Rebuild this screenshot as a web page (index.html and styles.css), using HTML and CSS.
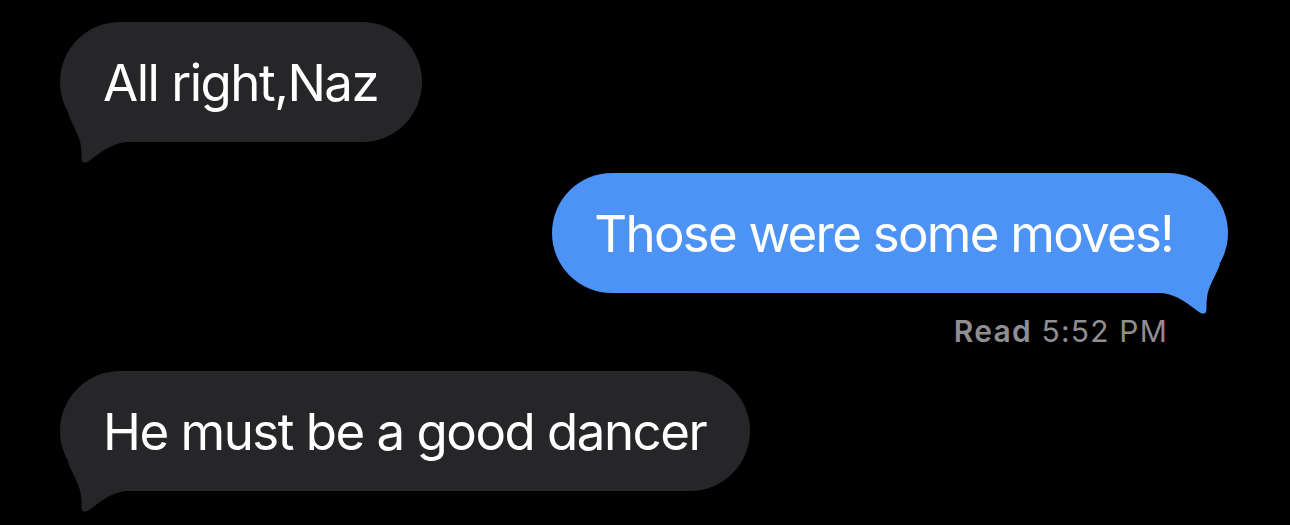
FILE: index.html
```html
<!DOCTYPE html>
<html lang="en">
<head>
    <meta charset="UTF-8">
    <meta name="viewport" content="width=device-width, initial-scale=1.0">
    <title>Messages</title>
    <link rel="stylesheet" href="styles.css">
</head>
<body>
    <div class="thread">
        <div class="bubble received">
            All right,Naz
            <svg class="tail" viewBox="0 0 70 50" width="70" height="50">
                <path d="M8 0 C12 12, 20 22, 21 34 C22 40, 21 45, 22 48 C23 50, 26 50, 29 48 C40 40, 50 31, 66 29 L66 0 Z" />
            </svg>
        </div>

        <div class="bubble sent">
            Those were some moves!
            <svg class="tail" viewBox="0 0 70 50" width="70" height="50">
                <path d="M8 0 C12 12, 20 22, 21 34 C22 40, 21 45, 22 48 C23 50, 26 50, 29 48 C40 40, 50 31, 66 29 L66 0 Z" />
            </svg>
        </div>
        <div class="receipt"><b>Read</b> 5:52 PM</div>

        <div class="bubble received last">
            He must be a good dancer
            <svg class="tail" viewBox="0 0 70 50" width="70" height="50">
                <path d="M8 0 C12 12, 20 22, 21 34 C22 40, 21 45, 22 48 C23 50, 26 50, 29 48 C40 40, 50 31, 66 29 L66 0 Z" />
            </svg>
        </div>
    </div>
</body>
</html>
```

FILE: styles.css
```css
body{
    margin: 0;
    background-color: #000;
    font-family: Inter, "Noto Sans", sans-serif;
    height: 525px;
    overflow: hidden;
}
.thread{
    display: flex;
    flex-direction: column;
    align-items: flex-start;
    padding: 22px 62px 0 60px;
}
.bubble{
    position: relative;
    height: 120px;
    box-sizing: border-box;
    padding: 3px 44px 0 43px;
    line-height: 116px;
    font-size: 51px;
    letter-spacing: -1.5px;
    color: #fff;
    border-radius: 60px;
    white-space: nowrap;
}
.received{
    background-color: #262629;
}
.received .tail{
    fill: #262629;
}
.sent{
    align-self: flex-end;
    margin-top: 31px;
    padding: 3px 55px 0 42px;
    letter-spacing: -1.75px;
    background-color: #4c93f5;
}
.sent .tail{
    fill: #4c93f5;
    left: auto;
    right: 0;
    transform: scaleX(-1);
}
.tail{
    position: absolute;
    left: 0;
    bottom: -21px;
}
.receipt{
    align-self: flex-end;
    margin: 20px 60px 0 0;
    font-size: 30px;
    line-height: 36px;
    letter-spacing: 1.2px;
    color: #8e8e93;
}
.receipt b{
    font-weight: 600;
}
.last{
    margin-top: 22px;
}
```
